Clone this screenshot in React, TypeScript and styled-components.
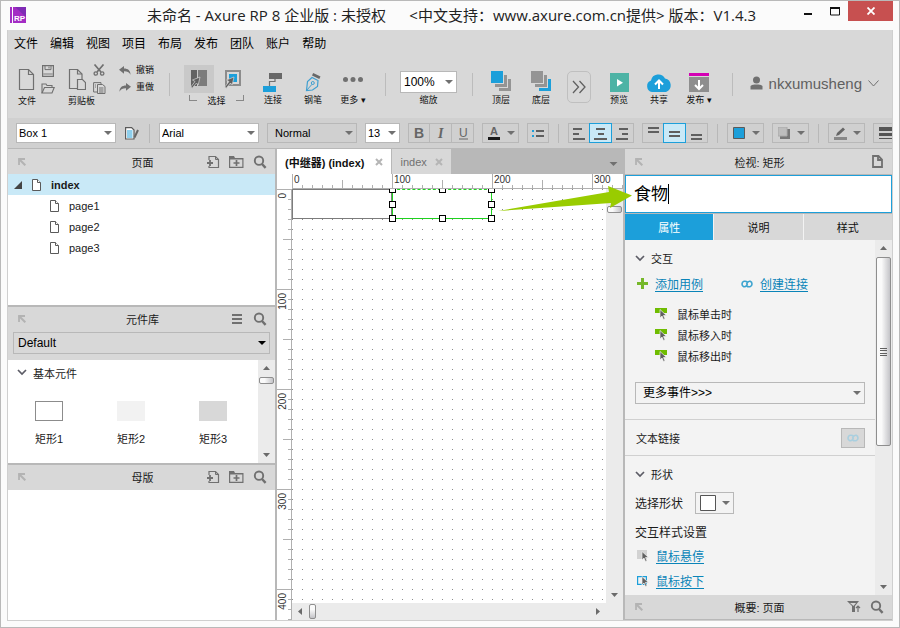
import React, { useEffect, useRef, useState } from "react";
import styled, { createGlobalStyle, css } from "styled-components";

const c = {
  panel: "#d8d8d8",
  bar: "#d0d0d0",
  line: "#b8b8b8",
  icon: "#707070",
  blue: "#1c9fda",
  pale: "#c9e9f7",
  link: "#0a84b8",
  green: "#76b82a",
};

const Global = createGlobalStyle`
  *, *::before, *::after { box-sizing: border-box; }
  body { margin: 0; background: #fbfbfb; }
  body, button, input, select {
    font-family: "Liberation Sans", "Noto Sans CJK SC", sans-serif;
    font-size: 11px;
    color: #1a1a1a;
  }
  button { border: 0; padding: 0; background: none; cursor: pointer; }
  svg { display: block; flex: none; }
  ul, h1, h2, h3 { margin: 0; padding: 0; list-style: none; font-weight: normal; }
  h2, h3 { font-size: 11px; }
`;

/* ---------- window frame ---------- */

const Frame = styled.div`
  display: flex;
  flex-direction: column;
  height: 100vh;
  min-height: 560px;
  border: 1px solid #b9b9b9;
  background: #fbfbfb;
  overflow: hidden;
`;
const TitleBar = styled.header`
  display: grid;
  grid-template-columns: 1fr auto 1fr;
  height: 29px;
  flex: none;
  padding: 0 6px 0 9px;
`;
const Logo = styled.div`
  padding-top: 6px;
`;
const Title = styled.h1`
  font-family: "Open Sans", "Noto Sans CJK SC", sans-serif;
  font-size: 15px;
  line-height: 29px;
  white-space: pre;
  color: #222;
`;
const WindowButtons = styled.div`
  display: flex;
  justify-content: flex-end;
`;
const WindowButton = styled.button<{ $close?: boolean }>`
  display: grid;
  place-items: center;
  width: ${(p) => (p.$close ? 45 : 27)}px;
  height: 20px;
  background: ${(p) => (p.$close ? "#c75050" : "transparent")};
`;
const Client = styled.div`
  display: flex;
  flex-direction: column;
  flex: 1;
  min-height: 0;
  margin: 0 6px 6px;
  border: solid #cfcfcf;
  border-width: 0 1px 1px;
  background: ${c.panel};
`;

/* ---------- menu and toolbar ---------- */

const Menu = styled.nav`
  display: flex;
  gap: 12px;
  height: 25px;
  flex: none;
  padding: 0 6px;
`;
const MenuItem = styled.button`
  font-size: 12px;
  color: #000;
`;
const Toolbar = styled.div`
  display: flex;
  height: 63px;
  flex: none;
  padding: 0 13px 0 10px;
`;
const ToolCluster = styled.div<{ $after: number }>`
  display: flex;
  flex-direction: column;
  margin-right: ${(p) => p.$after}px;
  padding-top: 8px;
`;
const ClusterIcons = styled.div`
  display: flex;
  align-items: center;
  gap: 6px;
  height: 32px;
`;
const ClusterColumn = styled.div`
  display: flex;
  flex-direction: column;
  gap: 6px;
`;
const ToolLabel = styled.span`
  font-size: 9px;
  line-height: 13px;
  color: #111;
  white-space: nowrap;
`;
const Tool = styled.button`
  display: flex;
  flex-direction: column;
  align-items: center;
  width: 40px;
  padding-top: 15px;
`;
const ToolIcon = styled.span`
  display: grid;
  place-items: center;
  height: 24px;
`;
const ZoomTool = styled.label`
  display: flex;
  flex-direction: column;
  align-items: center;
  gap: 1px;
  padding-top: 16px;
`;
const Histories = styled.div`
  display: flex;
  flex-direction: column;
  gap: 3px;
  padding-top: 8px;
`;
const HistoryButton = styled.button`
  display: flex;
  align-items: center;
  gap: 5px;
  height: 14px;
`;
const ModeButtons = styled.div`
  display: flex;
  margin: 2px 0;
`;
const ModeButton = styled.button<{ $on?: boolean }>`
  display: grid;
  place-items: center;
  width: 30px;
  height: 28px;
  margin-right: 4px;
  background: ${(p) => (p.$on ? "#c9c9c9" : "transparent")};
`;
const ModeLabel = styled.div`
  display: flex;
  justify-content: space-between;
  padding: 0 8px 0 5px;
`;
const Bracket = styled.i<{ $side: "left" | "right" }>`
  width: 8px;
  height: 6px;
  border-bottom: 1px solid #888;
  ${(p) => (p.$side === "left" ? "border-left" : "border-right")}: 1px solid #888;
`;
const Divider = styled.i<{ $before: number; $after: number }>`
  width: 1px;
  height: 23px;
  flex: none;
  margin: 18px ${(p) => p.$after}px 0 ${(p) => p.$before}px;
  background: #bcbcbc;
`;
const MoreTools = styled.button`
  display: grid;
  place-items: center;
  width: 24px;
  height: 32px;
  margin: 16px 8px 0 6px;
  border: 1px solid #bfbfbf;
  border-radius: 5px;
`;
const Account = styled.button`
  display: flex;
  align-items: center;
  gap: 6px;
  height: 24px;
  margin: 16px 0 0 auto;
  font-size: 15px;
  color: #606060;
`;

/* ---------- style bar ---------- */

const StyleBar = styled.div`
  display: flex;
  align-items: center;
  gap: 8px;
  height: 31px;
  flex: none;
  padding-left: 8px;
  border-bottom: 1px solid ${c.line};
  background: ${c.bar};
  overflow: hidden;
`;
const BarDivider = styled.i`
  width: 1px;
  height: 19px;
  margin: 0 1px;
  flex: none;
  background: ${c.line};
`;
const Segments = styled.div`
  display: flex;
  flex: none;
`;
const Segment = styled.button<{ $on?: boolean }>`
  display: grid;
  place-items: center;
  width: 22px;
  height: 20px;
  border: 1px solid ${c.line};
  & + & {
    border-left: 0;
  }
  ${(p) =>
    p.$on &&
    css`
      border-color: ${c.blue};
      background: ${c.pale};
      box-shadow: -1px 0 ${c.blue};
    `}
`;
const DropButton = styled.button<{ $tall?: boolean }>`
  display: flex;
  align-items: center;
  justify-content: space-between;
  flex: none;
  width: ${(p) => (p.$tall ? 39 : 37)}px;
  height: ${(p) => (p.$tall ? 22 : 20)}px;
  padding: 0 3px 0 ${(p) => (p.$tall ? 4 : 5)}px;
  border: 1px solid ${c.line};
`;
const IconButton = styled.button<{ $wide?: boolean }>`
  display: grid;
  place-items: center;
  flex: none;
  min-width: ${(p) => (p.$wide ? 16 : 14)}px;
`;

const SelectBox = styled.span<{ $w?: number; $h: number; $bg: string }>`
  display: grid;
  align-items: center;
  flex: none;
  width: ${(p) => (p.$w ? `${p.$w}px` : "auto")};
  height: ${(p) => p.$h}px;
  border: 1px solid ${c.line};
  background: ${(p) => p.$bg};
  & > * {
    grid-area: 1 / 1;
  }
  & > svg {
    justify-self: end;
    margin-right: 3px;
    pointer-events: none;
  }
`;
const NativeSelect = styled.select<{ $size: number; $pad: number }>`
  appearance: none;
  width: 100%;
  height: 100%;
  border: 0;
  padding: 0 0 0 ${(p) => p.$pad}px;
  background: transparent;
  font-size: ${(p) => p.$size}px;
  color: #000;
`;

/* ---------- workspace ---------- */

const Workspace = styled.main`
  display: grid;
  grid-template-columns: 267px minmax(0, 1fr) 267px;
  column-gap: 2px;
  flex: 1;
  min-height: 0;
  background: ${c.line};
`;
const Column = styled.div`
  display: flex;
  flex-direction: column;
  min-width: 0;
  min-height: 0;
`;
const LeftColumn = styled(Column)`
  gap: 2px;
`;
const Panel = styled.section<{ $grow?: boolean }>`
  display: flex;
  flex-direction: column;
  flex: ${(p) => (p.$grow ? "1 1 0" : "none")};
  min-height: 0;
  background: #fff;
`;
const PanelHead = styled.div`
  display: grid;
  grid-template-columns: 1fr auto 1fr;
  align-items: center;
  height: 25px;
  flex: none;
  padding: 0 8px 0 10px;
  background: ${c.panel};
`;
const PanelActions = styled.div`
  display: flex;
  justify-content: flex-end;
  align-items: center;
  gap: 9px;
`;
const TreeRow = styled.li<{ $root?: boolean }>`
  display: flex;
  align-items: center;
  height: 21px;
  gap: 10px;
  padding-left: ${(p) => (p.$root ? 6 : 42)}px;
  background: ${(p) => (p.$root ? c.pale : "transparent")};
  font-weight: ${(p) => (p.$root ? "bold" : "normal")};
`;
const LibraryPick = styled.div`
  padding: 0 5px 6px;
  background: ${c.panel};
`;
const LibraryBody = styled.div`
  display: flex;
  height: 103px;
`;
const LibraryItems = styled.div`
  flex: 1;
`;
const Heading = styled.h3`
  display: flex;
  align-items: center;
  gap: 6px;
  height: 26px;
  padding-left: 9px;
`;
const Shapes = styled.div`
  display: grid;
  grid-template-columns: repeat(3, 1fr);
  padding: 15px 4px 0 0;
`;
const ShapeTile = styled.button`
  display: flex;
  flex-direction: column;
  align-items: center;
  gap: 9px;
  line-height: 18px;
`;
const Swatch = styled.i<{ $fill: string; $edge: string }>`
  width: 28px;
  height: 20px;
  border: 1px solid ${(p) => p.$edge};
  background: ${(p) => p.$fill};
`;

/* scrollbars */

const Track = styled.div<{ $row?: boolean }>`
  display: flex;
  flex-direction: ${(p) => (p.$row ? "row" : "column")};
  align-items: center;
  justify-content: space-between;
  flex: none;
  ${(p) => (p.$row ? "height: 17px; padding: 0 5px;" : "width: 17px; padding: 5px 0;")}
  background: #ebebeb;
`;
const TrackStart = styled.div<{ $row?: boolean }>`
  display: flex;
  flex-direction: ${(p) => (p.$row ? "row" : "column")};
  align-items: center;
  gap: 5px;
  flex: ${(p) => (p.$row ? "none" : "1")};
`;
const Thumb = styled.i<{ $row?: boolean; $share?: number }>`
  display: grid;
  place-items: center;
  ${(p) =>
    p.$row
      ? "width: 7px; height: 15px;"
      : `width: 15px; height: ${p.$share ? `${p.$share}%` : "7px"};`}
  border: 1px solid #8e8e8e;
  border-radius: 2px;
  background: linear-gradient(${(p) => (p.$row ? "180deg" : "90deg")}, #fafafa 35%, #c4c4c8);
`;

/* editor */

const Tabs = styled.div`
  display: flex;
  align-items: stretch;
  height: 25px;
  flex: none;
  background: ${c.line};
`;
const Tab = styled.div<{ $on?: boolean }>`
  display: flex;
  align-items: center;
  gap: ${(p) => (p.$on ? 11 : 8)}px;
  padding: 0 8px;
  margin-right: 1px;
  background: ${(p) => (p.$on ? "#fff" : c.panel)};
  & > span {
    font-weight: ${(p) => (p.$on ? "bold" : "normal")};
    color: ${(p) => (p.$on ? "#111" : "#707070")};
  }
`;
const TabMenu = styled.button`
  margin: 4px 5px 0 auto;
`;
const Editor = styled.div`
  display: grid;
  grid-template-columns: 15px minmax(0, 1fr) 17px;
  grid-template-rows: 15px minmax(0, 1fr) 17px;
  flex: 1;
  min-height: 0;
  background: #ebebeb;
`;
const TopRuler = styled.div`
  grid-area: 1 / 1 / 2 / 4;
  padding-left: 15px;
  overflow: hidden;
  background: #fff;
`;
const SideRuler = styled.div`
  grid-area: 2 / 1 / 4 / 2;
  overflow: hidden;
  background: #fff;
`;
const Scale = styled.svg<{ $side?: boolean }>`
  width: ${(p) => (p.$side ? "15px" : "100%")};
  height: ${(p) => (p.$side ? "100%" : "15px")};
`;
const Artboard = styled.div`
  position: relative;
  grid-area: 2 / 2;
  overflow: hidden;
  background: conic-gradient(from 270deg at 1px 1px, #8a8a8a 90deg, transparent 0) 0 0 / 10px 10px #fff;
`;
const Widget = styled.div<{ $x: number; $selected?: boolean }>`
  position: absolute;
  left: ${(p) => p.$x}px;
  top: 0;
  width: 100px;
  height: 30px;
  border: 1px solid ${(p) => (p.$selected ? "#1fd21f" : "#7c7c7c")};
  ${(p) => p.$selected && "border-top-style: dashed;"}
  background: #fff;
`;
const Handle = styled.i<{ $x: number; $y: number }>`
  position: absolute;
  left: ${(p) => p.$x}px;
  top: ${(p) => p.$y}px;
  width: 7px;
  height: 7px;
  border: 1px solid #000;
  background: #fff;
`;
const EditorColumn = styled(Column)`
  position: relative;
`;
const Callout = styled.svg`
  position: absolute;
  right: -10px;
  top: 37px;
  z-index: 2;
  pointer-events: none;
`;

/* inspector */

const NameInput = styled.input`
  height: 38px;
  flex: none;
  margin: 1px 0;
  padding: 0 8px 4px;
  border: 1px solid ${c.blue};
  border-radius: 0;
  background: #fff;
  font-size: 17px;
  color: #000;
  outline: 0;
`;
const NameField = styled.div`
  display: grid;
  & > * {
    grid-area: 1 / 1;
  }
`;
const Caret = styled.i`
  width: 1px;
  height: 20px;
  margin: 10px 0 0 43px;
  background: #000;
`;
const InspectorTabs = styled.div`
  display: grid;
  grid-template-columns: repeat(3, 1fr);
  gap: 1px;
  flex: none;
  background: #f3f3f3;
`;
const InspectorTab = styled.button<{ $on?: boolean }>`
  height: 26px;
  background: ${(p) => (p.$on ? c.blue : c.panel)};
  color: ${(p) => (p.$on ? "#fff" : "#111")};
`;
const InspectorBody = styled.div`
  display: flex;
  flex: 1;
  min-height: 0;
  background: #f3f3f3;
`;
const Properties = styled.div`
  flex: 1;
  overflow: hidden;
`;
const Section = styled.section<{ $bottom?: number }>`
  padding: 5px 10px ${(p) => p.$bottom ?? 0}px;
  border-bottom: 1px solid #d0d0d0;
  &:last-child {
    border-bottom: 0;
  }
  & > ${Heading} {
    padding-left: 0;
  }
`;
const LinkRow = styled.div`
  display: grid;
  grid-template-columns: 104px 1fr;
  height: 26px;
`;
const LinkItem = styled.div`
  display: flex;
  align-items: center;
  gap: 7px;
  height: 25px;
  padding-left: 2px;
`;
const Link = styled.a`
  font-size: 12px;
  color: ${c.link};
  text-underline-offset: 2px;
`;
const Events = styled.ul`
  padding: 6px 0 16px 20px;
`;
const EventItem = styled.li`
  display: flex;
  align-items: center;
  gap: 10px;
  height: 21px;
`;
const TextLinkRow = styled.section`
  display: flex;
  align-items: center;
  justify-content: space-between;
  height: 36px;
  padding: 0 10px 0 11px;
  border-bottom: 1px solid #d0d0d0;
`;
const LinkButton = styled.button`
  display: grid;
  place-items: center;
  width: 24px;
  height: 20px;
  border: 1px solid ${c.line};
  background: ${c.panel};
`;
const Field = styled.div`
  display: flex;
  align-items: center;
  gap: 12px;
  height: 31px;
  font-size: 12px;
`;
const SubHeading = styled.h3`
  margin-top: 5px;
  font-size: 12px;
  line-height: 20px;
`;
const OutlineHead = styled(PanelHead)`
  border-bottom: 1px solid ${c.line};
`;

/* ---------- icons ---------- */

const Down = ({ color = "#707070", w = 8 }: { color?: string; w?: number }) => (
  <svg width={w} height="4" viewBox="0 0 8 4"><path d="M0 0h8L4 4z" fill={color} /></svg>
);
const ArrowTip = ({ turn }: { turn: number }) => (
  <svg width="7" height="7" viewBox="0 0 7 7">
    <path d="M0 5h7L3.5 1z" fill="#6a6a6a" transform={`rotate(${turn} 3.5 3.5)`} />
  </svg>
);
const Chevron = () => (
  <svg width="10" height="7" viewBox="0 0 10 7"><path d="M1 1l4 4 4-4" fill="none" stroke="#5c5c66" strokeWidth="1.7" /></svg>
);
const Corner = () => (
  <svg width="8" height="8" viewBox="0 0 8 8" fill="none" stroke="#b3b3b3"><path d="M1 7V1h6" strokeWidth="1.8" /><path d="M1 1l6.300 6.300" strokeWidth="2" /></svg>
);
const Search = () => (
  <svg width="14" height="14" viewBox="0 0 14 14" fill="none" stroke={c.icon}>
    <circle cx="6" cy="5.7" r="4.200" strokeWidth="1.9" /><path d="M9 9l3.600 3.800" strokeWidth="2.4" />
  </svg>
);
const AddPage = () => (
  <svg width="14" height="14" viewBox="0 0 14 14" fill="none" stroke={c.icon}>
    <path d="M3 5V1.500h6.500l3 3v8H3V11" strokeWidth="1.200" /><path d="M9.500 1.500v3h3" />
    <path d="M1 8h6M4 5v6" strokeWidth="1.800" />
  </svg>
);
const AddFolder = () => (
  <svg width="15" height="14" viewBox="0 0 15 14">
    <path d="M.6 3.500V12.400h13.300V3.500H.6" fill="none" stroke={c.icon} strokeWidth="1.200" />
    <path d="M0 1h5l1 2h8v1.500H0z" fill={c.icon} /><path d="M4.500 8h6M7.500 5v6" stroke={c.icon} strokeWidth="1.700" />
  </svg>
);
const Burger = () => (
  <svg width="10" height="11" viewBox="0 0 10 11" fill={c.icon}><path d="M0 0h10v2H0zM0 4h10v2H0zM0 8h10v2H0z" /></svg>
);
const Grip = () => (
  <svg width="7" height="8" viewBox="0 0 7 8" fill="#606060"><path d="M0 0h7v1H0zM0 2h7v1H0zM0 5h7v1H0zM0 7h7v1H0z" /></svg>
);
const PageIcon = () => (
  <svg width="9" height="12" viewBox="0 0 9 12" fill="#fff" stroke="#5a5a5a"><path d="M.5.5h5l3 3v8h-8z" /><path d="M5.500.5v3h3" /></svg>
);
const BigPage = () => (
  <svg width="17" height="23" viewBox="0 0 17 23" fill="none" stroke={c.icon} strokeWidth="1.200">
    <path d="M1.500 1.500h9l5 5v15h-14z" /><path d="M10.500 1.500v5h5" />
  </svg>
);
const Clipboard = () => (
  <svg width="18" height="23" viewBox="0 0 18 23" fill="none" stroke={c.icon} strokeWidth="1.200">
    <path d="M9 20.500H1.500v-19h8l4.500 4.500v5" /><path d="M9.500 1.500v4.500H14" /><path d="M9.500 11.500h5l3 3v7h-8z" />
  </svg>
);
const Save = () => (
  <svg width="12" height="12" viewBox="0 0 12 12" fill="none" stroke={c.icon}>
    <path d="M.6.6h10.800v10.800H.6z" strokeWidth="1.200" /><path d="M3 .6v4h6v-4" /><path d="M7 1.500v2" /><path d="M1 9h10" strokeWidth="2" stroke="#aaa" />
  </svg>
);
const Open = () => (
  <svg width="14" height="11" viewBox="0 0 14 11" fill="none" stroke={c.icon} strokeWidth="1.100">
    <path d="M1 10V1h4l1 1.500h5V4.500" /><path d="M1 10l2.500-5.500h9.700L11 10z" />
  </svg>
);
const Cut = () => (
  <svg width="12" height="12" viewBox="0 0 12 12" fill="none" stroke={c.icon}>
    <path d="M1.500.5L8 8M10.500.5L4 8" strokeWidth="1.700" /><circle cx="2.800" cy="9.500" r="1.700" strokeWidth="1.300" /><circle cx="9.200" cy="9.500" r="1.700" strokeWidth="1.300" />
  </svg>
);
const Copy = () => (
  <svg width="13" height="12" viewBox="0 0 13 12" fill="none" stroke={c.icon}>
    <path d="M4 10H.6V.6h7.400V2" /><path d="M4.500 2.500h5l2.500 2v7H4.500z" /><path d="M6 6h4.500M6 8h4.500M6 10h4.500M2 3h1M2 5h1" />
  </svg>
);
const Undo = ({ flip }: { flip?: boolean }) => (
  <svg width="12" height="9" viewBox="0 0 12 9">
    <path d="M0 3.800L5 0v2.500c4 0 6.500 2 6.500 6.300C10 6 8 5.200 5 5.300v2.500z" fill={c.icon} transform={flip ? "translate(12 0) scale(-1 1)" : undefined} />
  </svg>
);
const Cursor = () => (
  <path d="M10 8L2.500 11l2.500 1.500L.8 18l1.400 1.200L6.500 14l1.700 2z" fill="#606060" stroke="#d4d4d4" strokeWidth=".7" />
);
const SelectIntersect = () => (
  <svg width="18" height="20" viewBox="0 0 18 20">
    <path d="M1 1h6v16H1z" fill="#636363" /><path d="M8 1h9v16H8z" fill="#7c7c7c" /><Cursor />
  </svg>
);
const SelectContain = () => (
  <svg width="18" height="20" viewBox="0 0 18 20">
    <path d="M2 2h14v14H2z" fill="none" stroke="#8c8c8c" strokeWidth="2" /><path d="M5 5h8v8H5z" fill={c.blue} /><Cursor />
  </svg>
);
const Connect = () => (
  <svg width="20" height="20" viewBox="0 0 20 20">
    <path d="M6.500 14V9.500h5.500V5" fill="none" stroke={c.icon} strokeWidth="1.200" /><path d="M6 1h13v6H6z" fill="#686868" /><path d="M0 14h13v6H0z" fill={c.blue} />
  </svg>
);
const Pen = () => (
  <svg width="16" height="20" viewBox="0 0 16 20">
    <path d="M1.500 18.500L2.500 9.500 7 5.500l6 3-.5 6-5 3.500z" fill="none" stroke="#3f9fd0" strokeWidth="1.200" />
    <circle cx="7.800" cy="11" r="1.500" fill="none" stroke="#3f9fd0" /><path d="M1.500 18.500L7 12.300" stroke="#3f9fd0" />
    <path d="M8.200 1l7.300 3.500-1.200 2.600L7 3.500z" fill="#686868" />
  </svg>
);
const Dots = () => (
  <svg width="20" height="20" viewBox="0 0 20 20" fill={c.icon}><circle cx="2.500" cy="7.500" r="2.500" /><circle cx="10" cy="7.500" r="2.500" /><circle cx="17.500" cy="7.500" r="2.500" /></svg>
);
const Layers = ({ front, back }: { front: string; back: string }) => (
  <svg width="20" height="22" viewBox="0 0 20 22">
    <path d="M8 20h12V8h-3v9H8z" fill={back} /><path d="M4 16h12V4h-3v9H4z" fill="#949494" /><path d="M0 0h12v12H0z" fill={front} />
  </svg>
);
const Preview = () => (
  <svg width="19" height="19" viewBox="0 0 19 19"><path d="M0 0h19v19H0z" fill="#4db3a5" /><path d="M7 6v7.500l6-3.700z" fill="#fff" /></svg>
);
const Share = () => (
  <svg width="26" height="19" viewBox="0 0 26 19">
    <path d="M6 19a6 6 0 0 1-1-11.500A7.500 7.500 0 0 1 19 5.500 7 7 0 0 1 20 19z" fill={c.blue} /><path d="M13 16V8M9 11.500l4-4 4 4" fill="none" stroke="#fff" strokeWidth="2" />
  </svg>
);
const Publish = () => (
  <svg width="20" height="19" viewBox="0 0 20 19">
    <path d="M0 0h20v3H0z" fill="#d400b4" /><path d="M0 4h20v15H0z" fill="#8e8e8e" /><path d="M10 7v9M6 12l4 4 4-4" fill="none" stroke="#fff" strokeWidth="2" />
  </svg>
);
const User = () => (
  <svg width="13" height="14" viewBox="0 0 13 14" fill={c.icon}><circle cx="6.500" cy="4" r="3.500" /><path d="M.5 13.500V10q1-1.500 4-1.500h4q3 0 4 1.500v3.500z" /></svg>
);
const StyleEdit = () => (
  <svg width="14" height="13" viewBox="0 0 14 13">
    <path d="M.6.6h6l2.400 2.400v9H.6z" fill="#fff" stroke="#5a5a5a" strokeWidth="1.200" /><path d="M2 4h5.500M2 6h5.500M2 8h5.500M2 10h5.500" stroke={c.blue} />
    <path d="M13 3L9.500 10.500" stroke="#666" strokeWidth="2" />
  </svg>
);
const Bars = ({ rows, w = 13 }: { rows: [number, number, number][]; w?: number }) => (
  <svg width={w} height="13" viewBox={`0 0 ${w} 13`} stroke="#5f5f5f" strokeWidth="2">
    {rows.map(([x, y, len]) => <path key={y} d={`M${x} ${y}h${len}`} />)}
  </svg>
);
const Bullets = () => (
  <svg width="13" height="13" viewBox="0 0 13 13"><path d="M0 3h2v2H0zM0 8h2v2H0z" fill={c.blue} /><path d="M4 3h8v2H4zM4 8h8v2H4z" fill="#5f5f5f" /></svg>
);
const Fill = () => <svg width="12" height="12" viewBox="0 0 12 12"><path d="M.5.5h11v11H.5z" fill={c.blue} stroke="#5a5a5a" /></svg>;
const Shadow = () => (
  <svg width="12" height="12" viewBox="0 0 12 12"><path d="M2 2h10v10H2z" fill="#777" /><path d="M0 0h9v9H0z" fill="#bdbdbd" stroke="#aaa" /></svg>
);
const Pencil = () => (
  <svg width="13" height="13" viewBox="0 0 13 13" fill="#666"><path d="M0 10h13v3H0z" fill="#888" /><path d="M2 9l1-3 6-5.500 2 2L5 8z" /></svg>
);
const Lines = () => (
  <svg width="14" height="13" viewBox="0 0 14 13" fill="#555"><path d="M0 0h14v4H0zM0 6h14v3H0zM0 11h14v1H0z" /></svg>
);
const CloseTab = () => (
  <svg width="8" height="8" viewBox="0 0 8 8"><path d="M1 1l6 6M7 1L1 7" stroke="#b5b5b5" strokeWidth="2" /></svg>
);
const Plus = () => <svg width="11" height="11" viewBox="0 0 11 11"><path d="M0 5.500h11M5.500 0v11" stroke={c.green} strokeWidth="3" /></svg>;
const Chain = ({ color = "#3ba3cf" }: { color?: string }) => (
  <svg width="12" height="8" viewBox="0 0 12 8" fill="none" stroke={color} strokeWidth="1.600">
    <path d="M6.500 2.200C4.500.5 1 1 1 4s3 3.500 4.500 1.500L6.500 4" /><path d="M5.500 5.800C7.500 7.500 11 7 11 4S8 .5 6.500 2.500L5.500 4" />
  </svg>
);
const EventIcon = ({ kind = "event" }: { kind?: "event" | "hover" | "press" }) => (
  <svg width="12" height="12" viewBox="0 0 12 12">
    {kind === "event" && <path d="M0 0h12v5H0z" fill="#6fbc00" />}
    {kind === "hover" && <path d="M0 0h10v9H0z" fill="#d2d2d2" />}
    {kind === "press" && <path d="M.6 1.600h8.800v7.800H.6z" fill="none" stroke={c.blue} strokeWidth="1.200" />}
    <path d="M5 1.500v8.500l2-2 1.500 3.500 1.500-.7L8.500 7.500H11.500z" fill="#606060" stroke="#f3f3f3" strokeWidth=".7" />
  </svg>
);
const Filter = () => (
  <svg width="14" height="12" viewBox="0 0 14 12"><path d="M0 0h12L8 5v6H5V5z" fill={c.icon} /><path d="M3 2h6L6.500 5" fill={c.panel} /><path d="M11 11V5M9 7l2-2 2 2" fill="none" stroke={c.icon} strokeWidth="1.200" /></svg>
);
const NotePage = () => (
  <svg width="11" height="13" viewBox="0 0 11 13" fill="none" stroke={c.icon} strokeWidth="1.800"><path d="M1 1h5.500L10 4.500V12H1z" /><path d="M6 1v4h4" /></svg>
);

/* ---------- composed parts ---------- */

type PickProps = { label: string; value: string; w?: number; h?: number; bg?: string; size?: number; pad?: number; arrow?: string };
const Pick = ({ label, value, w, h = 20, bg = "#fff", size = 11, pad = 2, arrow }: PickProps) => (
  <SelectBox $w={w} $h={h} $bg={bg}>
    <NativeSelect aria-label={label} defaultValue={value} $size={size} $pad={pad}><option>{value}</option></NativeSelect>
    <Down color={arrow} />
  </SelectBox>
);

const ToolItem = ({ label, children }: { label: string; children: React.ReactNode }) => (
  <Tool><ToolIcon>{children}</ToolIcon><ToolLabel>{label}</ToolLabel></Tool>
);

const Head = ({ title, children }: { title: string; children?: React.ReactNode }) => (
  <PanelHead><Corner /><h2>{title}</h2><PanelActions>{children}</PanelActions></PanelHead>
);

const SearchButton = ({ label }: { label: string }) => <IconButton aria-label={label}><Search /></IconButton>;

/* Draws a tick every 10 units and a number every 100, as far as the ruler reaches. */
const Ruler = ({ side }: { side?: boolean }) => {
  const ref = useRef<SVGSVGElement>(null);
  const [length, setLength] = useState(0);
  useEffect(() => {
    const el = ref.current!;
    const measure = () => {
      const box = el.getBoundingClientRect();
      setLength(Math.floor(side ? box.height : box.width));
    };
    measure();
    const watcher = new ResizeObserver(measure);
    watcher.observe(el);
    return () => watcher.disconnect();
  }, [side]);

  const ticks = Array.from({ length: Math.ceil(length / 10) }, (_, i) => i);
  const marks = ticks.filter((i) => i % 10 === 0 && i * 10 + 22 <= length);
  return (
    <Scale ref={ref} $side={side} fill="#b0b0b0" shapeRendering="crispEdges">
      {side ? <rect x="14" width="1" height={length} /> : <rect y="14" width={length} height="1" />}
      {ticks.map((i) => {
        const len = i % 10 === 0 ? 15 : i % 5 === 0 ? 9 : 4;
        return side
          ? <rect key={i} x={15 - len} y={i * 10} width={len} height="1" />
          : <rect key={i} x={i * 10} y={15 - len} width="1" height={len} />;
      })}
      {marks.map((i) =>
        side ? (
          <text key={i} x="9" y={i * 10 + 4} fontSize="10" fill="#333" textAnchor="end" transform={`rotate(-90 9 ${i * 10 + 4})`}>{i * 10}</text>
        ) : (
          <text key={i} x={i * 10 + 2} y="9" fontSize="10" fill="#333">{i * 10}</text>
        )
      )}
    </Scale>
  );
};

const HANDLES = [[97, -3], [147, -3], [196, -3], [97, 12], [196, 12], [97, 26], [147, 26], [196, 26]];
const EVENTS = ["鼠标单击时", "鼠标移入时", "鼠标移出时"];

export default function App() {
  return (
    <Frame>
      <Global />
      <TitleBar>
        <Logo>
          <svg width="17" height="17" viewBox="0 0 17 17">
            <path d="M0 0h2v16H0zM3 0h13v16H3z" fill="#a32cc4" /><path d="M5 0h11v10z" fill="#7f2bb5" />
            <text x="4" y="14" fontSize="8" fontWeight="bold" fill="#fff">RP</text>
          </svg>
        </Logo>
        <Title>{"未命名 - Axure RP 8 企业版 : 未授权      <中文支持：www.axure.com.cn提供> 版本：V1.4.3"}</Title>
        <WindowButtons>
          <WindowButton aria-label="最小化"><svg width="8" height="12" viewBox="0 0 8 12"><path d="M0 8h8v2H0z" fill="#111" /></svg></WindowButton>
          <WindowButton aria-label="最大化"><svg width="10" height="9" viewBox="0 0 10 9"><path d="M.5 1h9v7h-9z" fill="none" stroke="#111" /><path d="M0 0h10v2H0z" fill="#111" /></svg></WindowButton>
          <WindowButton $close aria-label="关闭"><svg width="8" height="8" viewBox="0 0 8 8"><path d="M.5.5l7 7M7.500.5l-7 7" stroke="#fff" strokeWidth="1.800" /></svg></WindowButton>
        </WindowButtons>
      </TitleBar>

      <Client>
        <Menu>
          {["文件", "编辑", "视图", "项目", "布局", "发布", "团队", "账户", "帮助"].map((m) => <MenuItem key={m}>{m}</MenuItem>)}
        </Menu>

        <Toolbar>
          <ToolCluster $after={13}>
            <ClusterIcons>
              <IconButton aria-label="新建"><BigPage /></IconButton>
              <ClusterColumn>
                <IconButton aria-label="保存"><Save /></IconButton>
                <IconButton aria-label="打开"><Open /></IconButton>
              </ClusterColumn>
            </ClusterIcons>
            <ToolLabel>文件</ToolLabel>
          </ToolCluster>
          <ToolCluster $after={13}>
            <ClusterIcons>
              <IconButton aria-label="粘贴"><Clipboard /></IconButton>
              <ClusterColumn>
                <IconButton aria-label="剪切"><Cut /></IconButton>
                <IconButton aria-label="复制"><Copy /></IconButton>
              </ClusterColumn>
            </ClusterIcons>
            <ToolLabel>剪贴板</ToolLabel>
          </ToolCluster>
          <Histories>
            <HistoryButton><Undo /><ToolLabel>撤销</ToolLabel></HistoryButton>
            <HistoryButton><Undo flip /><ToolLabel>重做</ToolLabel></HistoryButton>
          </Histories>
          <Divider $before={15} $after={14} />
          <ToolCluster $after={1}>
            <ModeButtons>
              <ModeButton $on aria-label="相交选中"><SelectIntersect /></ModeButton>
              <ModeButton aria-label="包含选中"><SelectContain /></ModeButton>
            </ModeButtons>
            <ModeLabel><Bracket $side="left" /><ToolLabel>选择</ToolLabel><Bracket $side="right" /></ModeLabel>
          </ToolCluster>
          <ToolItem label="连接"><Connect /></ToolItem>
          <ToolItem label="钢笔"><Pen /></ToolItem>
          <ToolItem label="更多 ▾"><Dots /></ToolItem>
          <Divider $before={12} $after={14} />
          <ZoomTool>
            <Pick label="缩放" value="100%" w={57} h={22} size={12} pad={3} />
            <ToolLabel>缩放</ToolLabel>
          </ZoomTool>
          <Divider $before={15} $after={8} />
          <ToolItem label="顶层"><Layers front={c.blue} back="#949494" /></ToolItem>
          <ToolItem label="底层"><Layers front="#949494" back={c.blue} /></ToolItem>
          <MoreTools aria-label="更多工具">
            <svg width="14" height="14" viewBox="0 0 14 14"><path d="M1 1l5.500 6L1 13M7.500 1L13 7l-5.500 6" fill="none" stroke="#606060" strokeWidth="1.300" /></svg>
          </MoreTools>
          <ToolItem label="预览"><Preview /></ToolItem>
          <ToolItem label="共享"><Share /></ToolItem>
          <ToolItem label="发布 ▾"><Publish /></ToolItem>
          <Divider $before={13} $after={12} />
          <Account><User />nkxumusheng
            <svg width="11" height="7" viewBox="0 0 11 7"><path d="M.5.5l5 5.500 5-5.500" fill="none" stroke="#707070" /></svg>
          </Account>
        </Toolbar>

        <StyleBar>
          <Pick label="样式" value="Box 1" w={100} />
          <IconButton $wide aria-label="管理样式"><StyleEdit /></IconButton>
          <BarDivider />
          <Pick label="字体" value="Arial" w={100} />
          <Pick label="字形" value="Normal" w={90} bg="transparent" pad={7} />
          <Pick label="字号" value="13" w={35} />
          <Segments>
            <Segment aria-label="粗体"><svg width="12" height="16"><text x="1" y="13" fontSize="14" fontWeight="bold" fill="#666">B</text></svg></Segment>
            <Segment aria-label="斜体"><svg width="12" height="16"><text x="3" y="13" fontSize="14" fontStyle="italic" fontFamily="Liberation Serif" fontWeight="bold" fill="#666">I</text></svg></Segment>
            <Segment aria-label="下划线"><svg width="12" height="16"><text x="2" y="12" fontSize="12" fill="#666">U</text><path d="M2 14h9" stroke="#666" /></svg></Segment>
          </Segments>
          <DropButton aria-label="文字颜色">
            <svg width="13" height="18"><text x="2" y="11" fontSize="11" fontWeight="bold" fill="#666">A</text><path d="M0 13h12v3H0z" fill="#1a1a1a" /></svg>
            <Down />
          </DropButton>
          <Segments><Segment aria-label="项目符号"><Bullets /></Segment></Segments>
          <BarDivider />
          <Segments>
            <Segment aria-label="左对齐"><Bars rows={[[0, 2, 9], [0, 7, 6], [0, 12, 12]]} /></Segment>
            <Segment $on aria-label="居中"><Bars rows={[[2, 2, 9], [4, 7, 6], [0, 12, 13]]} /></Segment>
            <Segment aria-label="右对齐"><Bars rows={[[3, 2, 9], [6, 7, 6], [0, 12, 12]]} /></Segment>
          </Segments>
          <Segments>
            <Segment aria-label="顶部"><Bars w={11} rows={[[0, 1, 11], [0, 5, 11]]} /></Segment>
            <Segment $on aria-label="中部"><Bars w={11} rows={[[0, 5, 11], [0, 9, 11]]} /></Segment>
            <Segment aria-label="底部"><Bars w={11} rows={[[0, 8, 11], [0, 12, 11]]} /></Segment>
          </Segments>
          <BarDivider />
          <DropButton aria-label="填充"><Fill /><Down /></DropButton>
          <DropButton aria-label="阴影"><Shadow /><Down /></DropButton>
          <BarDivider />
          <DropButton aria-label="线条颜色"><Pencil /><Down /></DropButton>
          <DropButton aria-label="线宽"><Lines /><Down /></DropButton>
        </StyleBar>

        <Workspace>
          <LeftColumn>
            <Panel $grow>
              <Head title="页面">
                <IconButton aria-label="添加页面"><AddPage /></IconButton>
                <IconButton aria-label="添加文件夹"><AddFolder /></IconButton>
                <SearchButton label="搜索页面" />
              </Head>
              <ul>
                <TreeRow $root>
                  <svg width="8" height="8" viewBox="0 0 8 8"><path d="M8 0v8H0z" fill="#444" /></svg>
                  <PageIcon />index
                </TreeRow>
                {["page1", "page2", "page3"].map((p) => <TreeRow key={p}><PageIcon />{p}</TreeRow>)}
              </ul>
            </Panel>
            <Panel>
              <Head title="元件库">
                <IconButton aria-label="选项"><Burger /></IconButton>
                <SearchButton label="搜索元件" />
              </Head>
              <LibraryPick><Pick label="元件库" value="Default" h={22} bg="transparent" size={12} pad={4} arrow="#000" /></LibraryPick>
              <LibraryBody>
                <LibraryItems>
                  <Heading><Chevron />基本元件</Heading>
                  <Shapes>
                    <ShapeTile><Swatch $fill="#fff" $edge="#8c8c8c" />矩形1</ShapeTile>
                    <ShapeTile><Swatch $fill="#f2f2f2" $edge="#f2f2f2" />矩形2</ShapeTile>
                    <ShapeTile><Swatch $fill="#d8d8d8" $edge="#d8d8d8" />矩形3</ShapeTile>
                  </Shapes>
                </LibraryItems>
                <Track aria-hidden>
                  <TrackStart><ArrowTip turn={0} /><Thumb /></TrackStart>
                  <ArrowTip turn={180} />
                </Track>
              </LibraryBody>
            </Panel>
            <Panel $grow>
              <Head title="母版">
                <IconButton aria-label="添加母版"><AddPage /></IconButton>
                <IconButton aria-label="添加文件夹"><AddFolder /></IconButton>
                <SearchButton label="搜索母版" />
              </Head>
            </Panel>
          </LeftColumn>

          <EditorColumn>
            <Tabs>
              <Tab $on><span>(中继器) (index)</span><button aria-label="关闭 (中继器)"><CloseTab /></button></Tab>
              <Tab><span>index</span><button aria-label="关闭 index"><CloseTab /></button></Tab>
              <TabMenu aria-label="全部标签"><Down w={9} /></TabMenu>
            </Tabs>
            <Editor>
              <TopRuler><Ruler /></TopRuler>
              <SideRuler><Ruler side /></SideRuler>
              <Artboard>
                <Widget $x={0} />
                <Widget $x={100} $selected />
                {HANDLES.map(([x, y]) => <Handle key={`${x},${y}`} $x={x} $y={y} />)}
              </Artboard>
              <Track aria-hidden>
                <TrackStart><ArrowTip turn={0} /><Thumb /></TrackStart>
                <ArrowTip turn={180} />
              </Track>
              <Track $row aria-hidden>
                <TrackStart $row><ArrowTip turn={-90} /><Thumb $row /></TrackStart>
                <ArrowTip turn={90} />
              </Track>
            </Editor>
            <Callout width="136" height="25" viewBox="0 0 136 25">
              <path d="M1 25L112 6 111 0l24 9.500L113 22l1-5z" fill="#99cc00" />
            </Callout>
          </EditorColumn>

          <Column>
            <Head title="检视: 矩形"><IconButton aria-label="页面备注"><NotePage /></IconButton></Head>
            <NameField>
              <NameInput aria-label="形状名称" defaultValue="食物" />
              <Caret />
            </NameField>
            <InspectorTabs role="tablist">
              <InspectorTab role="tab" aria-selected $on>属性</InspectorTab>
              <InspectorTab role="tab" aria-selected={false}>说明</InspectorTab>
              <InspectorTab role="tab" aria-selected={false}>样式</InspectorTab>
            </InspectorTabs>
            <InspectorBody>
              <Properties>
                <Section $bottom={15}>
                  <Heading><Chevron />交互</Heading>
                  <LinkRow>
                    <LinkItem><Plus /><Link href="#case">添加用例</Link></LinkItem>
                    <LinkItem><Chain /><Link href="#link">创建连接</Link></LinkItem>
                  </LinkRow>
                  <Events>
                    {EVENTS.map((e) => <EventItem key={e}><EventIcon />{e}</EventItem>)}
                  </Events>
                  <Pick label="更多事件" value="更多事件>>>" h={22} bg="transparent" size={12} pad={7} />
                </Section>
                <TextLinkRow>文本链接<LinkButton aria-label="文本链接"><Chain color="#a9cfdf" /></LinkButton></TextLinkRow>
                <Section>
                  <Heading><Chevron />形状</Heading>
                  <Field>选择形状
                    <DropButton $tall aria-label="选择形状">
                      <svg width="16" height="16"><path d="M.5.5h15v15H.5z" fill="#fff" stroke="#555" /></svg><Down />
                    </DropButton>
                  </Field>
                  <SubHeading>交互样式设置</SubHeading>
                  <LinkItem><EventIcon kind="hover" /><Link href="#hover">鼠标悬停</Link></LinkItem>
                  <LinkItem><EventIcon kind="press" /><Link href="#press">鼠标按下</Link></LinkItem>
                </Section>
              </Properties>
              <Track aria-hidden>
                <TrackStart>
                  <ArrowTip turn={0} />
                  <Thumb $share={56}><Grip /></Thumb>
                </TrackStart>
                <ArrowTip turn={180} />
              </Track>
            </InspectorBody>
            <OutlineHead>
              <Corner /><h2>概要: 页面</h2>
              <PanelActions><IconButton aria-label="筛选"><Filter /></IconButton><SearchButton label="搜索概要" /></PanelActions>
            </OutlineHead>
          </Column>
        </Workspace>
      </Client>
    </Frame>
  );
}
